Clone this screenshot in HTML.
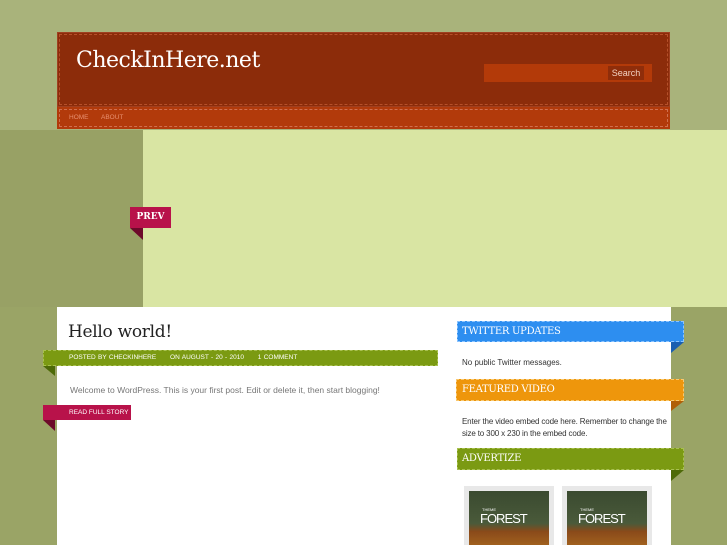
<!DOCTYPE html>
<html><head><style>
*{margin:0;padding:0;box-sizing:border-box}
body{width:727px;height:545px;overflow:hidden;background:#a9b37b;font-family:"Liberation Sans",sans-serif;position:relative}
.a{position:absolute}
.serif{font-family:"DejaVu Serif","Liberation Serif",serif}
</style></head><body>
<div class="a" style="left:0;top:130px;width:143px;height:177px;background:#98a165"></div>
<div class="a" style="left:143px;top:130px;width:584px;height:177px;background:#d9e5a3"></div>
<div class="a" style="left:0;top:307px;width:727px;height:238px;background:#9aa466"></div>
<!-- header -->
<div class="a" style="left:57px;top:32px;width:613px;height:75px;background:#8c2c0a;border:1px solid #a04020"></div>
<div class="a" style="left:59px;top:34px;width:609px;height:71px;border:1px dashed #b6502a"></div>
<div class="a serif" style="left:76px;top:48px;color:#fff;font-size:22px;letter-spacing:-0.5px">CheckInHere.net</div>
<div class="a" style="left:484px;top:64px;width:168px;height:18px;background:#b33a09"></div>
<div class="a" style="left:608px;top:66px;width:36px;height:14px;background:#8f2d0a;color:#f2d0c0;font-size:9px;text-align:center;line-height:14px">Search</div>
<div class="a" style="left:57px;top:107px;width:613px;height:22px;background:#b23a0b"></div>
<div class="a" style="left:59px;top:109px;width:609px;height:18px;border:1px dashed #d07050"></div>
<div class="a" style="left:69px;top:114px;color:#e89070;font-size:6.5px">HOME</div>
<div class="a" style="left:101px;top:114px;color:#e89070;font-size:6.5px">ABOUT</div>
<!-- prev -->
<div class="a serif" style="left:130px;top:207px;width:41px;height:21px;background:#b8124a;color:#fff;font-size:9px;font-weight:bold;text-align:center;line-height:21px">PREV</div>
<div class="a" style="left:130px;top:228px;width:0;height:0;border-top:12px solid #6d0a2a;border-left:13px solid transparent"></div>
<!-- content -->
<div class="a" style="left:57px;top:307px;width:614px;height:238px;background:#fff"></div>
<div class="a serif" style="left:68px;top:322px;font-size:17px;color:#222;letter-spacing:-0.3px">Hello world!</div>
<div class="a" style="left:43px;top:350px;width:395px;height:16px;background:#7b9a12;border:1px dashed #a8c050"></div>
<div class="a" style="left:43px;top:366px;border-top:10px solid #4e6a08;border-left:12px solid transparent"></div>
<div class="a" style="left:69px;top:354px;color:#fff;font-size:6.5px;word-spacing:0.5px">POSTED BY CHECKINHERE &nbsp;&nbsp;&nbsp;&nbsp; ON AUGUST - 20 - 2010 &nbsp;&nbsp;&nbsp;&nbsp; 1 COMMENT</div>
<div class="a" style="left:70px;top:385px;color:#777;font-size:8.5px">Welcome to WordPress. This is your first post. Edit or delete it, then start blogging!</div>
<div class="a" style="left:43px;top:405px;width:88px;height:15px;background:#b8124a"></div>
<div class="a" style="left:43px;top:420px;border-top:11px solid #6d0a2a;border-left:12px solid transparent"></div>
<div class="a" style="left:69px;top:409px;color:#fff;font-size:6.5px">READ FULL STORY</div>
<!-- sidebar -->
<div class="a" style="left:457px;top:321px;width:227px;height:21px;background:#2d8ef0;border:1px dashed #8cc4ff"></div>
<div class="a" style="left:671px;top:342px;border-top:11px solid #1a5fb0;border-right:13px solid transparent"></div>
<div class="a serif" style="left:462px;top:326px;color:#fff;font-size:10px;letter-spacing:-0.3px">TWITTER UPDATES</div>
<div class="a" style="left:462px;top:358px;color:#333;font-size:8px">No public Twitter messages.</div>
<div class="a" style="left:456px;top:379px;width:228px;height:22px;background:#ee960c;border:1px dashed #f8c870"></div>
<div class="a" style="left:671px;top:401px;border-top:10px solid #b06008;border-right:13px solid transparent"></div>
<div class="a serif" style="left:462px;top:384px;color:#fff;font-size:10px;letter-spacing:-0.3px">FEATURED VIDEO</div>
<div class="a" style="left:462px;top:416px;color:#333;font-size:8px;line-height:12px;width:215px;letter-spacing:-0.15px">Enter the video embed code here. Remember to change the size to 300 x 230 in the embed code.</div>
<div class="a" style="left:457px;top:448px;width:227px;height:22px;background:#7b9a12;border:1px dashed #a8c050"></div>
<div class="a" style="left:671px;top:470px;border-top:11px solid #4e6a08;border-right:13px solid transparent"></div>
<div class="a serif" style="left:462px;top:453px;color:#fff;font-size:10px;letter-spacing:-0.3px">ADVERTIZE</div>
<div class="a" style="left:464px;top:486px;width:90px;height:59px;background:#e8e8e8"></div>
<div class="a" style="left:469px;top:491px;width:80px;height:54px;background:linear-gradient(#3a4a30 0,#4a5a3a 60%,#8a4a1a 75%,#a0601e 100%)"></div>
<div class="a" style="left:482px;top:507px;color:#fff;font-size:4px">THEME</div>
<div class="a" style="left:480px;top:511px;color:#fff;font-size:13px;letter-spacing:-1px">FOREST</div>
<div class="a" style="left:562px;top:486px;width:90px;height:59px;background:#e8e8e8"></div>
<div class="a" style="left:567px;top:491px;width:80px;height:54px;background:linear-gradient(#3a4a30 0,#4a5a3a 60%,#8a4a1a 75%,#a0601e 100%)"></div>
<div class="a" style="left:580px;top:507px;color:#fff;font-size:4px">THEME</div>
<div class="a" style="left:578px;top:511px;color:#fff;font-size:13px;letter-spacing:-1px">FOREST</div>
</body></html>
